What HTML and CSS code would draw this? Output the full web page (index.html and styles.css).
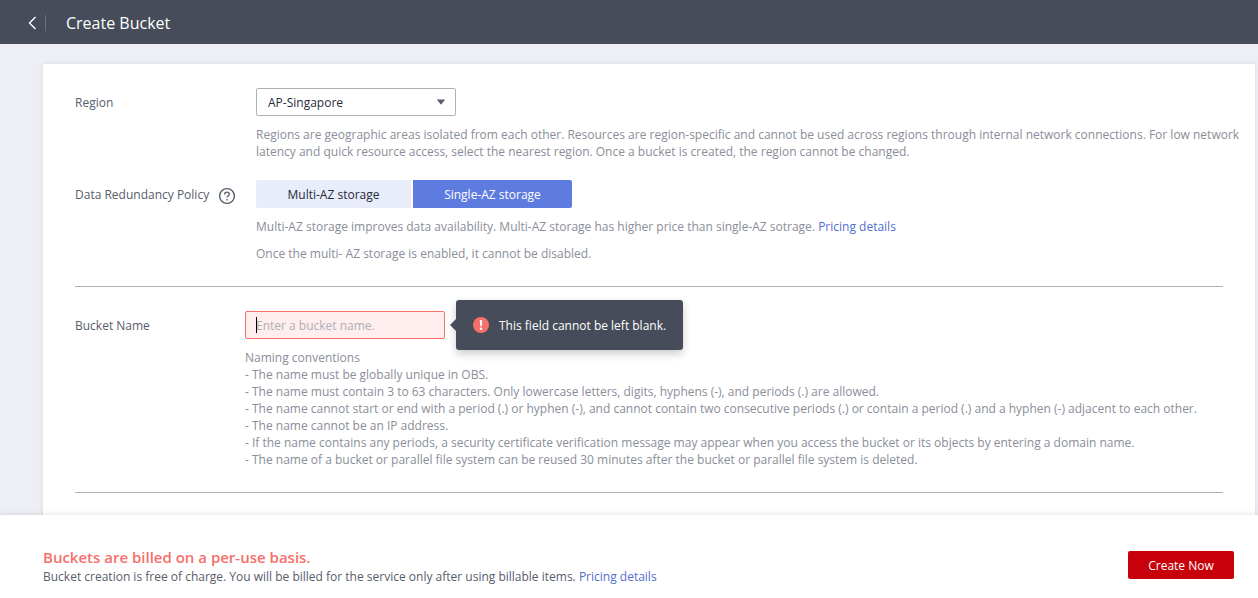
FILE: index.html
```html
<!DOCTYPE html>
<html lang="en">
<head>
<meta charset="utf-8">
<meta name="viewport" content="width=device-width, initial-scale=1">
<title>Create Bucket</title>
<link rel="stylesheet" href="styles.css">
</head>
<body>
<header class="topbar">
  <button class="back" type="button" aria-label="Back">
    <svg width="9" height="14" viewBox="0 0 9 14" fill="none" stroke="currentColor" stroke-width="1.4"><path d="M7.5 1 1.5 7l6 6"/></svg>
  </button>
  <h1 class="title">Create Bucket</h1>
</header>
<main class="content">
  <form class="card" id="bucket-form">
    <section class="group">
      <div class="row">
        <label class="label" for="region">Region</label>
        <div class="field">
          <div class="select-wrap">
            <select class="select" id="region"><option>AP-Singapore</option></select>
            <svg class="arrow" width="10" height="6" viewBox="0 0 10 6"><path d="M.8.5h8.4L5.4 5.2a.6.6 0 0 1-.8 0z" fill="#575d6c"/></svg>
          </div>
          <p class="hint wide">Regions are geographic areas isolated from each other. Resources are region-specific and cannot be used across regions through internal network connections. For low network latency and quick resource access, select the nearest region. Once a bucket is created, the region cannot be changed.</p>
        </div>
      </div>
      <div class="row">
        <div class="label">
          <span id="policy-label">Data Redundancy Policy</span>
          <svg class="help" width="18" height="18" viewBox="0 0 18 18" fill="none" stroke="#575d6c" stroke-width="1.4"><circle cx="9" cy="9" r="7.4"/><path d="M6.7 7.4c0-1.4 1-2.3 2.3-2.3s2.3.9 2.3 2.1c0 1.6-2.3 1.6-2.3 3.4"/><path d="M9 11.9v1.6"/></svg>
        </div>
        <div class="field">
          <div class="segments" role="group" aria-labelledby="policy-label">
            <button class="segment" type="button" aria-pressed="false">Multi-AZ storage</button>
            <button class="segment selected" type="button" aria-pressed="true">Single-AZ storage</button>
          </div>
          <p class="hint">Multi-AZ storage improves data availability. Multi-AZ storage has higher price than single-AZ sotrage. <a class="link" href="#">Pricing details</a></p>
          <p class="hint">Once the multi- AZ storage is enabled, it cannot be disabled.</p>
        </div>
      </div>
    </section>
    <section class="group name-group">
      <div class="row">
        <label class="label" for="name">Bucket Name</label>
        <div class="field">
          <div class="input-wrap">
            <input class="input" id="name" type="text" placeholder="Enter a bucket name." aria-invalid="true" aria-describedby="name-error">
            <span class="caret"></span>
            <div class="tooltip" id="name-error" role="alert">
              <svg width="16" height="16" viewBox="0 0 16 16"><circle cx="8" cy="8" r="8" fill="#f66f6a"/><path d="M6.8 3h2.4l-.4 6.2H7.2z" fill="#fff"/><circle cx="8" cy="11.8" r="1.2" fill="#fff"/></svg>
              <span>This field cannot be left blank.</span>
            </div>
          </div>
          <div class="hint">
            <p>Naming conventions</p>
            <p>- The name must be globally unique in OBS.</p>
            <p>- The name must contain 3 to 63 characters. Only lowercase letters, digits, hyphens (-), and periods (.) are allowed.</p>
            <p>- The name cannot start or end with a period (.) or hyphen (-), and cannot contain two consecutive periods (.) or contain a period (.) and a hyphen (-) adjacent to each other.</p>
            <p>- The name cannot be an IP address.</p>
            <p>- If the name contains any periods, a security certificate verification message may appear when you access the bucket or its objects by entering a domain name.</p>
            <p>- The name of a bucket or parallel file system can be reused 30 minutes after the bucket or parallel file system is deleted.</p>
          </div>
        </div>
      </div>
    </section>
  </form>
</main>
<footer class="footer">
  <div>
    <p class="billing">Buckets are billed on a per-use basis.</p>
    <p>Bucket creation is free of charge. You will be billed for the service only after using billable items. <a class="link" href="#">Pricing details</a></p>
  </div>
  <button class="create" type="submit" form="bucket-form">Create Now</button>
</footer>
</body>
</html>
```
FILE: styles.css
```css
* { box-sizing: border-box; }
body {
  margin: 0;
  height: 100vh;
  display: flex;
  flex-direction: column;
  background: #eeeff5;
  color: #575d6c;
  font: 12px/17px "Open Sans", "Noto Sans", sans-serif;
}
p, h1 { margin: 0; }
button, input, select { font: inherit; }
button { border: 0; padding: 0; cursor: pointer; }

.topbar {
  flex: none;
  display: flex;
  align-items: center;
  gap: 20px;
  height: 44px;
  padding: 2px 28px 0;
  background: #464c59;
  color: #fff;
}
.back {
  display: flex;
  align-items: center;
  height: 16px;
  width: 18px;
  background: none;
  color: #fff;
  border-right: 1px solid #6b707c;
}
.title { font-size: 16px; line-height: 22px; font-weight: 400; }

.content { flex: 1; min-height: 0; overflow: hidden; padding: 20px 3px 0 43px; }
.card {
  min-height: 100%;
  padding: 24px 32px;
  background: #fff;
  box-shadow: 0 0 4px rgba(0, 0, 0, .1);
}
.group { border-bottom: 1px solid #adb0b8; padding-bottom: 24px; margin-bottom: 24px; }
.row { display: grid; grid-template-columns: 181px minmax(0, 1fr); }
.row + .row { margin-top: 20px; }
.name-group .row { grid-template-columns: 170px minmax(0, 1fr); }
.label { display: flex; align-items: center; gap: 9px; height: 28px; }
.help { margin-top: 3px; }
.hint { margin-top: 10px; color: #8a8e99; }
.hint.wide { margin-right: -24px; }
.link { color: #526ecc; text-decoration: none; }

.select-wrap, .input-wrap { position: relative; width: 200px; height: 28px; }
.select, .input {
  display: block;
  width: 100%;
  height: 28px;
  padding: 0 11px;
  border: 1px solid #adb0b8;
  border-radius: 2px;
  background: #fff;
  color: #252b3a;
  outline: 0;
}
.select { appearance: none; }
.arrow { position: absolute; right: 10px; top: 11px; pointer-events: none; }

.segments { display: flex; gap: 2px; }
.segment {
  width: 155px;
  height: 28px;
  border-radius: 2px 0 0 2px;
  background: #e9edfa;
  color: #252b3a;
}
.segment.selected { width: 159px; border-radius: 0 2px 2px 0; background: #5e7ce0; color: #fff; }

.input { padding: 0 10px; border-color: #f66f6a; background: #ffeeed; }
.input::placeholder { color: #adb0b8; opacity: 1; }
.caret { position: absolute; left: 11px; top: 6px; width: 1px; height: 16px; background: #000; }
.tooltip {
  position: absolute;
  left: 211px;
  top: -11px;
  display: flex;
  align-items: center;
  gap: 10px;
  height: 50px;
  padding: 0 17px;
  border-radius: 3px;
  background: #464c59;
  color: #fff;
  font-weight: 500;
  white-space: nowrap;
  box-shadow: 0 4px 8px rgba(0, 0, 0, .2);
}
.tooltip::before {
  content: "";
  position: absolute;
  left: -6px;
  top: 19px;
  border: 6px solid transparent;
  border-left-width: 0;
  border-right-color: #464c59;
}

.footer {
  position: relative;
  flex: none;
  display: flex;
  align-items: center;
  justify-content: space-between;
  min-height: 83px;
  padding: 17px 24px 0 43px;
  background: #fff;
  box-shadow: 0 0 6px rgba(0, 0, 0, .14);
}
.billing { font-size: 15px; line-height: 22px; font-weight: 600; color: #f66f6a; }
.create {
  width: 106px;
  height: 28px;
  border-radius: 2px;
  background: #c7000b;
  color: #fff;
}
```
